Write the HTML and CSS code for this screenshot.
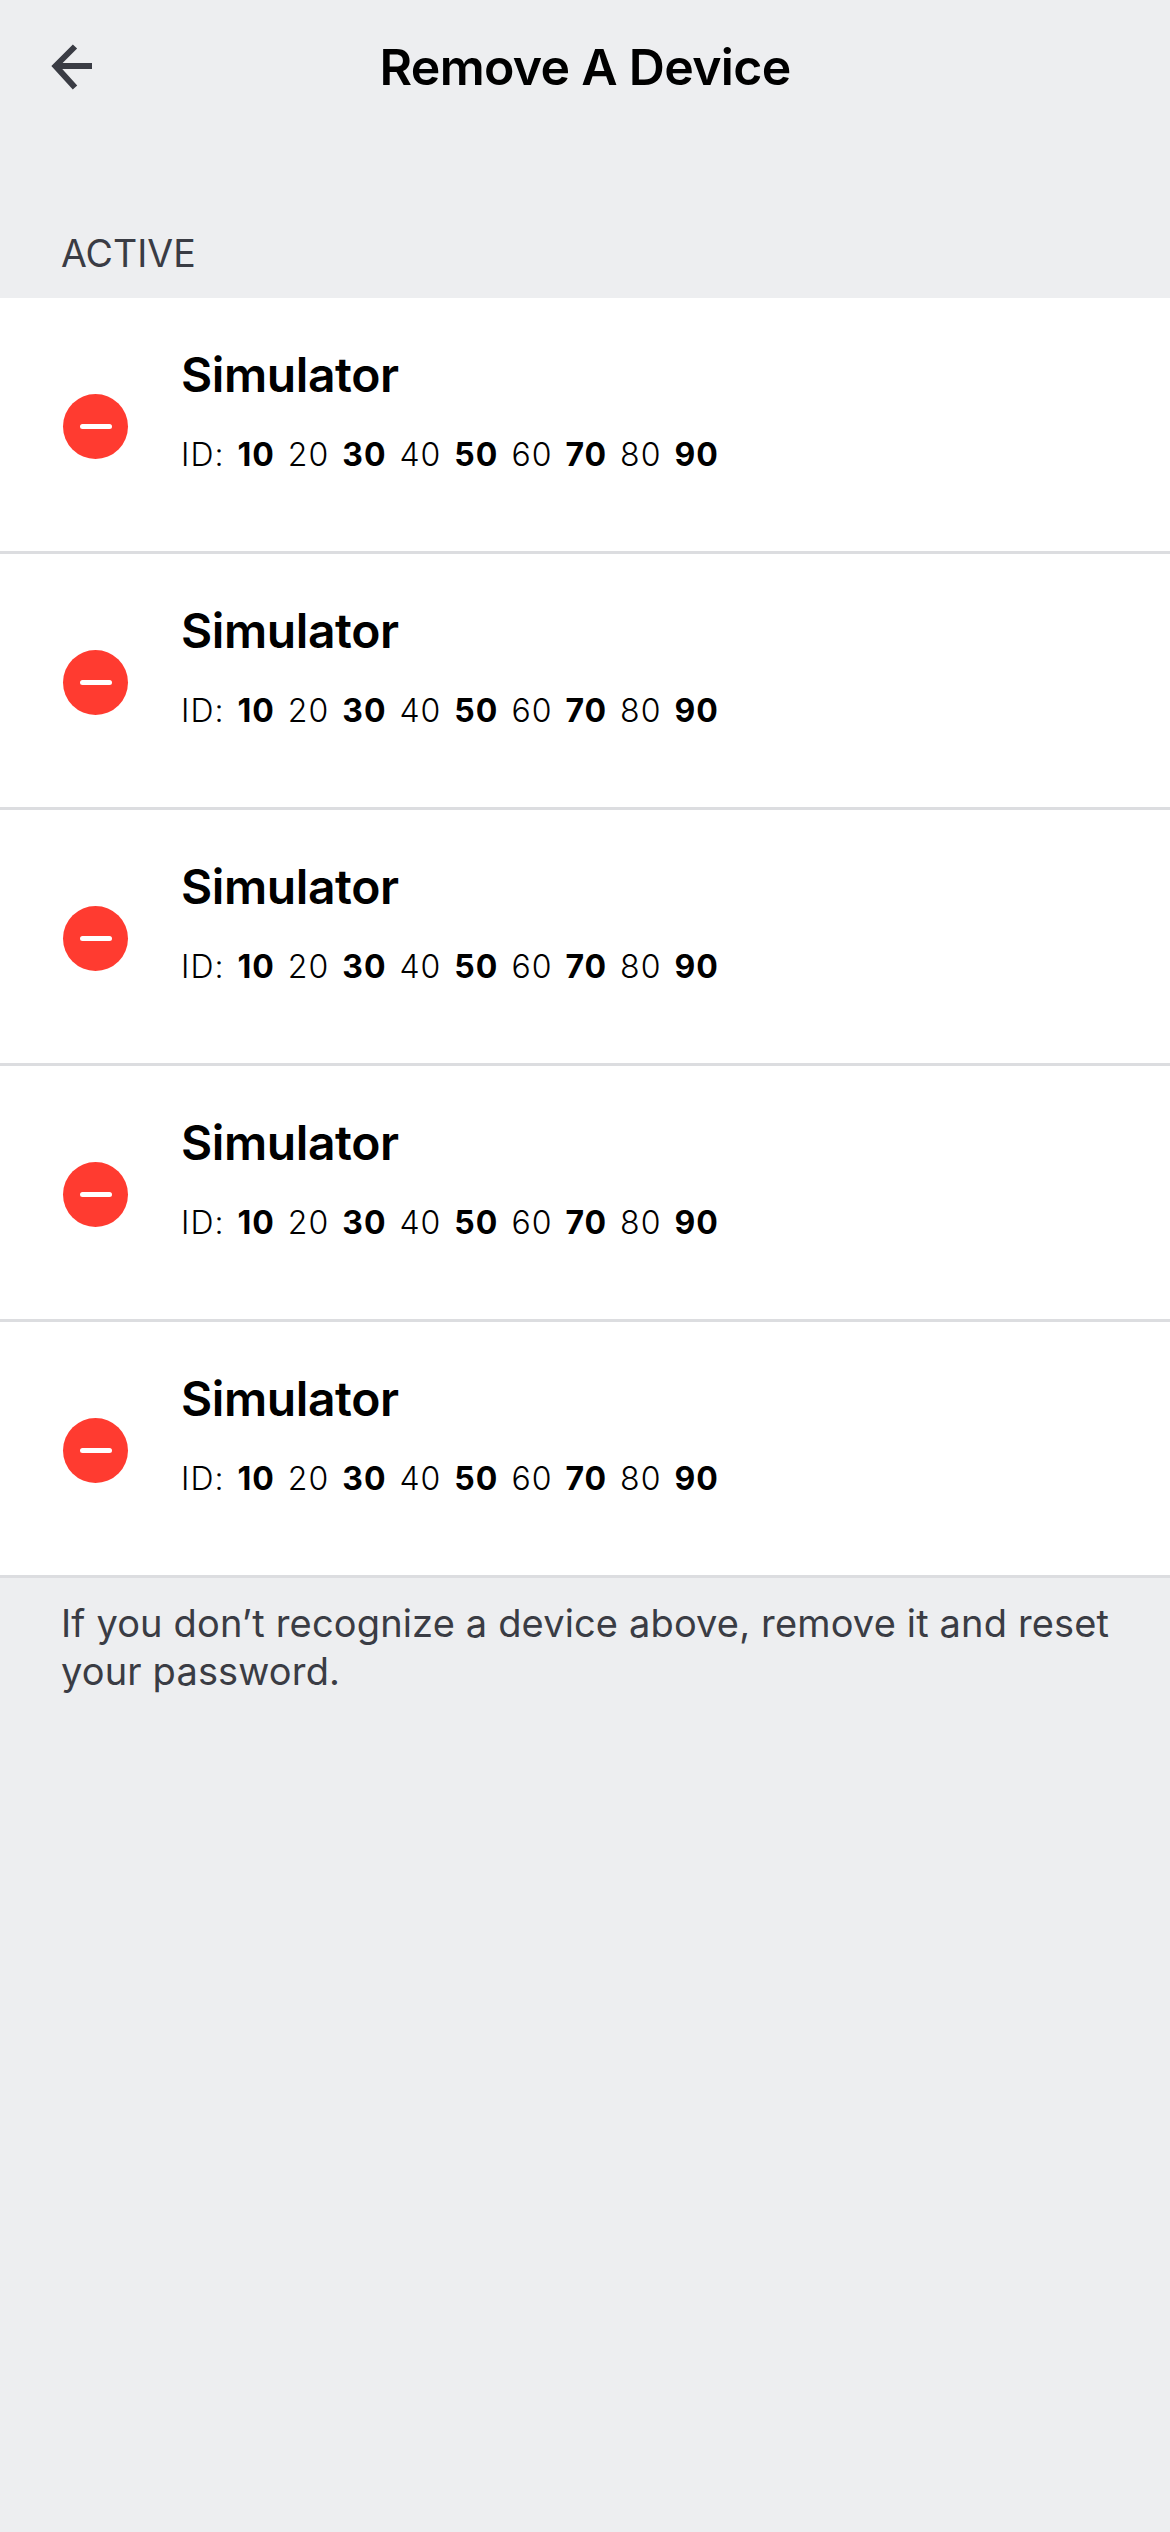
FILE: index.html
```html
<!DOCTYPE html>
<html lang="en">
<head>
    <meta charset="UTF-8">
    <title>Remove A Device</title>
    <link rel="stylesheet" href="styles.css">
</head>
<body>
    <header class="top-bar">
        <button class="back-btn" aria-label="Back">
            <svg width="44" height="46" viewBox="0 0 44 46" fill="none">
                <path d="M25 2.5 L5.5 22 L25 43.5 M5.5 22 H42" stroke="#3a3c44" stroke-width="6"/>
            </svg>
        </button>
        <h1>Remove A Device</h1>
    </header>

    <h2 class="section-label">ACTIVE</h2>

    <ul class="device-list">
        <li class="device-row">
            <span class="remove-icon"><span class="minus"></span></span>
            <div class="device-info">
                <div class="device-name">Simulator</div>
                <div class="device-id">ID: <b>10</b> 20 <b>30</b> 40 <b>50</b> 60 <b>70</b> 80 <b>90</b></div>
            </div>
        </li>
        <li class="device-row">
            <span class="remove-icon"><span class="minus"></span></span>
            <div class="device-info">
                <div class="device-name">Simulator</div>
                <div class="device-id">ID: <b>10</b> 20 <b>30</b> 40 <b>50</b> 60 <b>70</b> 80 <b>90</b></div>
            </div>
        </li>
        <li class="device-row">
            <span class="remove-icon"><span class="minus"></span></span>
            <div class="device-info">
                <div class="device-name">Simulator</div>
                <div class="device-id">ID: <b>10</b> 20 <b>30</b> 40 <b>50</b> 60 <b>70</b> 80 <b>90</b></div>
            </div>
        </li>
        <li class="device-row">
            <span class="remove-icon"><span class="minus"></span></span>
            <div class="device-info">
                <div class="device-name">Simulator</div>
                <div class="device-id">ID: <b>10</b> 20 <b>30</b> 40 <b>50</b> 60 <b>70</b> 80 <b>90</b></div>
            </div>
        </li>
        <li class="device-row">
            <span class="remove-icon"><span class="minus"></span></span>
            <div class="device-info">
                <div class="device-name">Simulator</div>
                <div class="device-id">ID: <b>10</b> 20 <b>30</b> 40 <b>50</b> 60 <b>70</b> 80 <b>90</b></div>
            </div>
        </li>
    </ul>

    <p class="footnote">If you don’t recognize a device above, remove it and reset your password.</p>
</body>
</html>
```

FILE: styles.css
```css
:root {
    --page-bg: #edeef0;
    --text-dark: #3a3c44;
    --divider: #dcdde0;
    --red: #ff3b30;
}

* {
    box-sizing: border-box;
}

body {
    margin: 0;
    min-height: 2532px;
    background-color: var(--page-bg);
    color: #000000;
    font-family: Inter, "Liberation Sans", sans-serif;
}

.top-bar {
    position: relative;
    height: 133px;
    display: flex;
    justify-content: center;
    padding-top: 41px;
}
.top-bar h1 {
    margin: 0;
    font-size: 50px;
    line-height: 52px;
    font-weight: 600;
    letter-spacing: -0.7px;
}
.back-btn {
    position: absolute;
    left: 50px;
    top: 44px;
    padding: 0;
    border: none;
    background: none;
    line-height: 0;
}

.section-label {
    margin: 0;
    height: 165px;
    padding: 98px 0 0 61px;
    font-size: 37.5px;
    line-height: 46px;
    font-weight: 400;
    color: var(--text-dark);
}

.device-list {
    margin: 0;
    padding: 0;
    list-style: none;
}
.device-row {
    height: 256px;
    display: flex;
    align-items: center;
    gap: 53px;
    padding: 0 0 0 63px;
    background-color: #ffffff;
    border-bottom: 3px solid var(--divider);
}
.remove-icon {
    width: 65px;
    height: 65px;
    margin-top: 3px;
    border-radius: 50%;
    background-color: var(--red);
    display: flex;
    align-items: center;
    justify-content: center;
}
.minus {
    width: 32px;
    height: 5px;
    border-radius: 2.5px;
    background-color: #ffffff;
}
.device-info {
    margin-bottom: 29px;
}
.device-name {
    font-size: 48px;
    line-height: 58px;
    font-weight: 600;
    letter-spacing: -0.4px;
}
.device-id {
    margin-top: 31px;
    font-size: 32px;
    line-height: 40px;
    font-weight: 300;
    letter-spacing: 1px;
    word-spacing: 3px;
}
.device-id b {
    font-weight: 700;
}

.footnote {
    margin: 0;
    padding: 21px 50px 0 61px;
    font-size: 38px;
    line-height: 48px;
    letter-spacing: 0.15px;
    color: var(--text-dark);
}
```
